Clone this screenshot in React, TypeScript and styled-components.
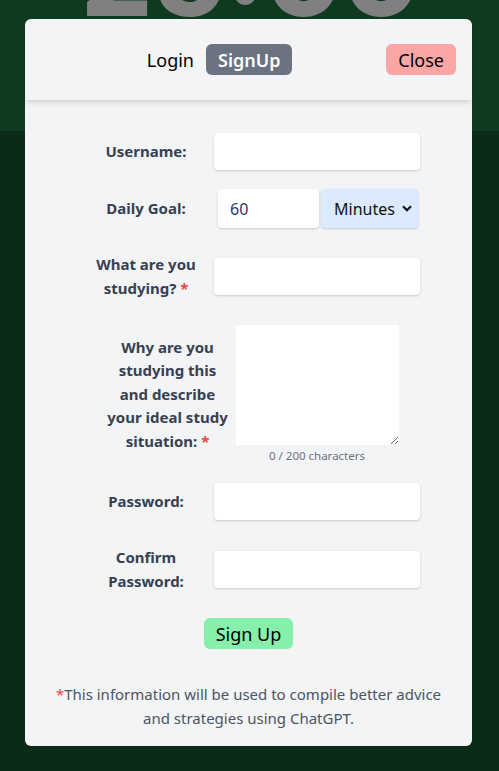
import React from 'react'
import styled, { createGlobalStyle } from 'styled-components'

const GlobalStyle = createGlobalStyle`
  html, body {
    margin: 0;
    padding: 0;
  }
  body {
    background: #0b2a18;
    font-family: "Noto Sans", "Open Sans", sans-serif;
    overflow: hidden;
  }
`

const Page = styled.div`
  position: relative;
  height: 771px;
  background: #0b2a18;
`

const Hero = styled.section`
  height: 131px;
  background: #0e3b1f;
  display: flex;
  justify-content: center;
  overflow: hidden;
`

const Timer = styled.div`
  font-family: Inter, sans-serif;
  font-weight: 800;
  font-size: 112px;
  line-height: 1;
  color: #808080;
  margin-top: -81px;
  padding-left: 2px;
`

const Modal = styled.div`
  position: absolute;
  top: 19px;
  left: 25px;
  width: 447px;
  background: #f3f4f6;
  border-radius: 6px;
`

const Header = styled.header`
  display: flex;
  align-items: center;
  padding: 25px 16px;
  border-radius: 6px 6px 0 0;
  box-shadow: 0 4px 6px -1px rgba(0, 0, 0, 0.1), 0 2px 4px -2px rgba(0, 0, 0, 0.1);
`

const Tabs = styled.div`
  flex: 1;
  display: flex;
  justify-content: center;
`

const Button = styled.button<{ $bg: string; $color?: string; $bold?: boolean }>`
  font-family: inherit;
  font-size: 18px;
  font-weight: ${p => (p.$bold ? 600 : 400)};
  line-height: 28px;
  padding: 1.5px 12px;
  border: 0;
  border-radius: 6px;
  background: ${p => p.$bg};
  color: ${p => p.$color || '#000'};
  cursor: pointer;
`

const SubmitButton = styled(Button)`
  margin-top: 25px;
`

const Form = styled.form`
  display: flex;
  flex-direction: column;
  align-items: center;
  padding-top: 33px;
`

const Row = styled.div<{ $space?: number }>`
  display: flex;
  align-items: center;
  gap: 6px;
  padding-left: 7px;
  margin-top: ${p => p.$space || 0}px;
`

const Label = styled.label`
  width: 124px;
  text-align: center;
  font-weight: 700;
  font-size: 15px;
  line-height: 23.5px;
  color: #374151;
`

const Required = styled.span`
  color: #ef4444;
`

const TextInput = styled.input`
  width: 206px;
  height: 37px;
  box-sizing: border-box;
  border: 0;
  border-radius: 4px;
  background: #fff;
  padding: 0 12px;
  font-family: inherit;
  font-size: 16px;
  box-shadow: 0 1px 3px rgba(0, 0, 0, 0.1), 0 1px 2px rgba(0, 0, 0, 0.08);
`

const GoalGroup = styled.div`
  width: 206px;
  box-sizing: border-box;
  padding-left: 4px;
  display: flex;
  gap: 2px;
`

const NumberInput = styled(TextInput)`
  width: 101px;
  height: 39px;
  color: #1f3a68;
`

const SelectWrap = styled.div`
  position: relative;
  width: 97px;
  height: 39px;
`

const Select = styled.select`
  appearance: none;
  width: 100%;
  height: 100%;
  border: 0;
  border-radius: 4px;
  background: #dbeafe;
  padding: 0 0 0 13px;
  font-family: inherit;
  font-size: 16px;
  color: #111;
  box-shadow: 0 1px 3px rgba(0, 0, 0, 0.1), 0 1px 2px rgba(0, 0, 0, 0.08);
`

const Chevron = styled.svg`
  position: absolute;
  right: 6px;
  top: 16px;
  pointer-events: none;
`

const AreaColumn = styled.div`
  display: flex;
  flex-direction: column;
  align-items: center;
`

const TextArea = styled.textarea`
  width: 163px;
  height: 120px;
  box-sizing: border-box;
  border: 0;
  background: #fff;
  font-family: inherit;
  font-size: 16px;
`

const Counter = styled.div`
  margin-top: 3px;
  font-size: 11.5px;
  line-height: 16px;
  color: #6b7280;
`

const Footer = styled.p`
  margin: 0;
  padding: 33px 24px 16px;
  text-align: center;
  font-size: 15px;
  line-height: 24px;
  color: #4b5563;
`

export default function App() {
  return (
    <Page>
      <GlobalStyle />
      <Hero>
        <Timer>25:00</Timer>
      </Hero>
      <Modal>
        <Header>
          <Tabs>
            <Button $bg="transparent">Login</Button>
            <Button $bg="#6b7280" $color="#fff" $bold>SignUp</Button>
          </Tabs>
          <Button $bg="#fca5a5">Close</Button>
        </Header>
        <Form onSubmit={e => e.preventDefault()}>
          <Row>
            <Label>Username:</Label>
            <TextInput type="text" />
          </Row>
          <Row $space={19}>
            <Label>Daily Goal:</Label>
            <GoalGroup>
              <NumberInput type="number" defaultValue={60} />
              <SelectWrap>
                <Select defaultValue="minutes">
                  <option value="minutes">Minutes</option>
                  <option value="hours">Hours</option>
                </Select>
                <Chevron width="10" height="7" viewBox="0 0 10 7">
                  <path d="M1 1.2 L5 5.2 L9 1.2" fill="none" stroke="#111" strokeWidth="2.2" />
                </Chevron>
              </SelectWrap>
            </GoalGroup>
          </Row>
          <Row $space={25}>
            <Label>What are you studying? <Required>*</Required></Label>
            <TextInput type="text" />
          </Row>
          <Row $space={25}>
            <Label>Why are you studying this and describe your ideal study situation: <Required>*</Required></Label>
            <AreaColumn>
              <TextArea />
              <Counter>0 / 200 characters</Counter>
            </AreaColumn>
          </Row>
          <Row $space={19}>
            <Label>Password:</Label>
            <TextInput type="password" />
          </Row>
          <Row $space={26}>
            <Label>Confirm Password:</Label>
            <TextInput type="password" />
          </Row>
          <SubmitButton $bg="#86efac" type="submit">Sign Up</SubmitButton>
        </Form>
        <Footer>
          <Required>*</Required>This information will be used to compile better advice and strategies using ChatGPT.
        </Footer>
      </Modal>
    </Page>
  )
}
